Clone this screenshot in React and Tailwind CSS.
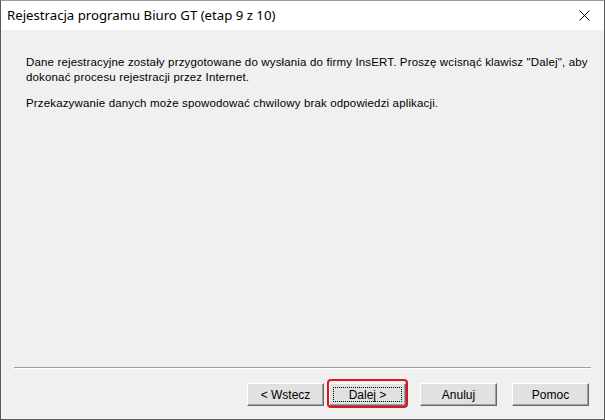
import React from 'react'

function Btn({ label, focused }) {
  return (
    <div className="w-[77px] h-[23px] bg-[#e1e1e1] border border-t-white border-l-white border-r-[#696969] border-b-[#696969] shadow-[inset_-1px_-1px_0_#a0a0a0] flex items-center justify-center">
      <div className={`flex items-center justify-center w-[69px] h-[15px] ${focused ? 'border border-dotted border-black' : ''}`}>
        <span className="text-[12px] text-black">{label}</span>
      </div>
    </div>
  )
}

export default function App() {
  return (
    <div
      className="w-[605px] h-[420px] flex flex-col bg-[#f0f0f0] border border-[#5a5a5a] border-t-[#9a9a9a]"
      style={{ fontFamily: '"Liberation Sans", Arial, sans-serif' }}
    >
      <div className="h-[29px] bg-white flex items-center justify-between pl-[6px] pr-[14px] shrink-0">
        <span className="text-[13.2px] text-black" style={{ fontFamily: '"Noto Sans", "Open Sans", sans-serif' }}>
          Rejestracja programu Biuro GT (etap 9 z 10)
        </span>
        <svg width="11" height="11" viewBox="0 0 11 11">
          <path d="M0.5 0.5 L10.5 10.5 M10.5 0.5 L0.5 10.5" stroke="#000" strokeWidth="1" />
        </svg>
      </div>

      <div className="flex-1 flex flex-col px-[13px]">
        <div className="pl-[12px] pt-[25px] text-[11.5px] leading-[15px] text-black tracking-[0.15px]">
          <p>
            Dane rejestracyjne zostały przygotowane do wysłania do firmy InsERT. Proszę wcisnąć klawisz "Dalej", aby
            <br />
            dokonać procesu rejestracji przez Internet.
          </p>
          <p className="mt-[11px]">Przekazywanie danych może spowodować chwilowy brak odpowiedzi aplikacji.</p>
        </div>

        <div className="flex-1" />

        <div className="h-[2px] border-t border-t-[#a0a0a0] border-b border-b-white" />

        <div className="flex items-center justify-end pt-[14px] pb-[13px] pr-[2px]">
          <div className="mr-[5px]">
            <Btn label="< Wstecz" />
          </div>
          <div className="relative mr-[14px]">
            <Btn label="Dalej >" focused />
            <div className="absolute -left-[2px] -top-[4px] -right-[2px] -bottom-[2px] border-2 border-[#e0141e] rounded-[4px]" />
          </div>
          <div className="mr-[15px]">
            <Btn label="Anuluj" />
          </div>
          <Btn label="Pomoc" />
        </div>
      </div>
    </div>
  )
}
